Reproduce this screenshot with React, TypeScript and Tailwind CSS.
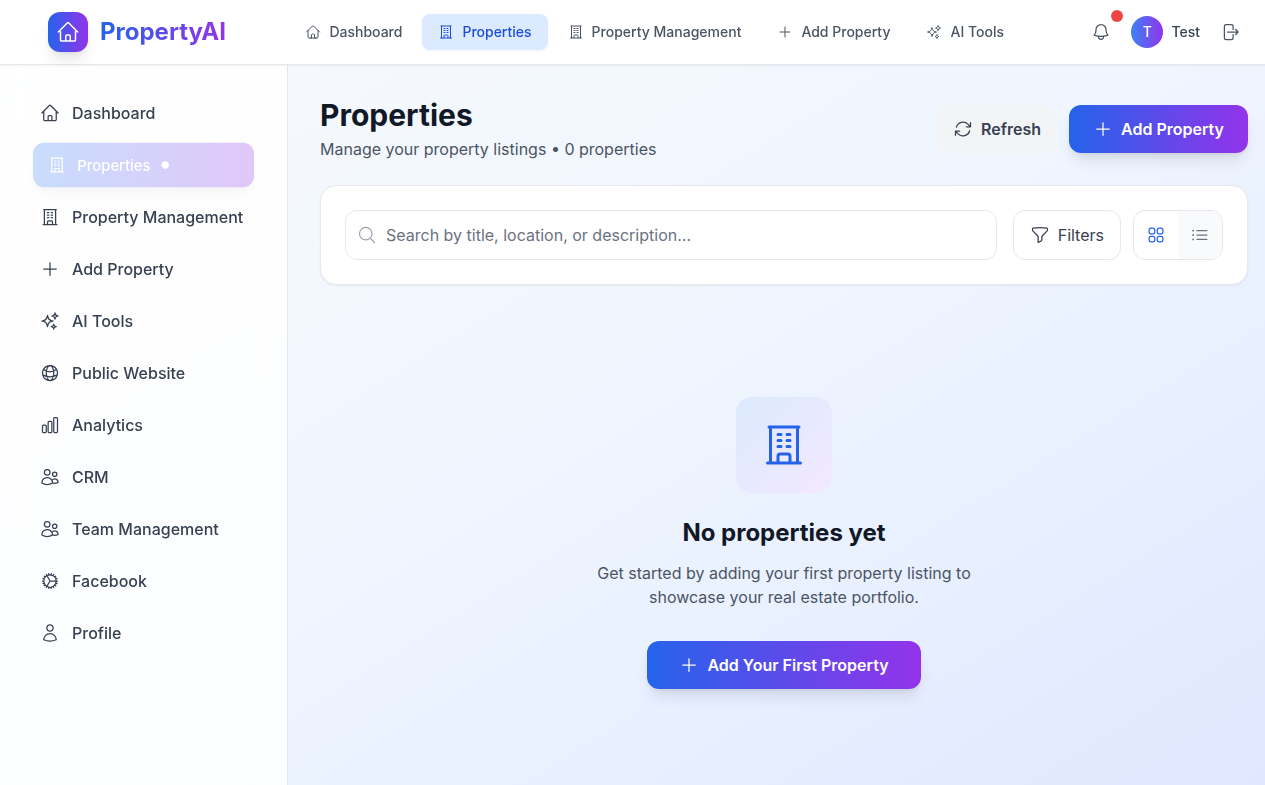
import type { IconType } from "react-icons";
import {
  HiOutlineArrowPath,
  HiOutlineArrowRightOnRectangle,
  HiOutlineBell,
  HiOutlineBuildingOffice,
  HiOutlineChartBar,
  HiOutlineCog,
  HiOutlineFunnel,
  HiOutlineGlobeAlt,
  HiOutlineHome,
  HiOutlineListBullet,
  HiOutlineMagnifyingGlass,
  HiOutlinePlus,
  HiOutlineSparkles,
  HiOutlineSquares2X2,
  HiOutlineUser,
  HiOutlineUsers,
} from "react-icons/hi2";

type NavItem = { label: string; icon: IconType; active?: boolean };

const topNav: NavItem[] = [
  { label: "Dashboard", icon: HiOutlineHome },
  { label: "Properties", icon: HiOutlineBuildingOffice, active: true },
  { label: "Property Management", icon: HiOutlineBuildingOffice },
  { label: "Add Property", icon: HiOutlinePlus },
  { label: "AI Tools", icon: HiOutlineSparkles },
];

const sideNav: NavItem[] = [
  ...topNav,
  { label: "Public Website", icon: HiOutlineGlobeAlt },
  { label: "Analytics", icon: HiOutlineChartBar },
  { label: "CRM", icon: HiOutlineUsers },
  { label: "Team Management", icon: HiOutlineUsers },
  { label: "Facebook", icon: HiOutlineCog },
  { label: "Profile", icon: HiOutlineUser },
];

function Header() {
  return (
    <header className="relative z-10 flex h-[65px] shrink-0 items-center border-b border-gray-200 bg-white/95 pl-12 pr-[17px] shadow-xs backdrop-blur-md">
      <div className="flex w-[241.4px] shrink-0 items-center gap-3">
        <div className="flex size-10 items-center justify-center rounded-xl bg-linear-to-r/srgb from-[#2563eb] to-[#9333ea] text-white shadow-lg">
          <HiOutlineHome className="size-6" />
        </div>
        <span className="bg-linear-to-r/srgb from-[#2563eb] to-[#9333ea] bg-clip-text text-2xl font-bold text-transparent">
          PropertyAI
        </span>
      </div>
      <nav className="flex items-center gap-1">
        {topNav.map(({ label, icon: Icon, active }) => (
          <a
            key={label}
            className={
              active
                ? "flex h-9 items-center gap-2 whitespace-nowrap rounded-lg bg-[#dbeafe] px-4 text-sm font-medium text-[#1d4ed8] shadow-xs"
                : "flex h-9 items-center gap-2 whitespace-nowrap rounded-lg px-4 text-sm font-medium text-[#4b5563]"
            }
          >
            <Icon className="size-4" />
            {label}
          </a>
        ))}
      </nav>
      <div className="ml-auto flex items-center gap-3">
        <button className="relative p-2 text-[#4b5563]">
          <HiOutlineBell className="size-5" />
          <span className="absolute -right-1 -top-1 size-3 rounded-full bg-[#ef4444]" />
        </button>
        <div className="flex items-center gap-2">
          <div className="flex size-8 items-center justify-center rounded-full bg-linear-to-r/srgb from-[#3b82f6] to-[#9333ea] text-sm font-medium text-white">
            T
          </div>
          <span className="text-sm font-medium text-[#374151]">Test</span>
        </div>
        <button className="p-2 text-[#4b5563]">
          <HiOutlineArrowRightOnRectangle className="size-5" />
        </button>
      </div>
    </header>
  );
}

function Sidebar() {
  return (
    <aside className="w-72 shrink-0 border-r border-gray-200 bg-white/85 p-6 backdrop-blur-md">
      <nav className="flex flex-col gap-1">
        {sideNav.map(({ label, icon: Icon, active }) => (
          <a
            key={label}
            className={
              active
                ? "flex h-12 scale-[0.925] items-center gap-3 whitespace-nowrap rounded-xl bg-linear-to-r/srgb from-[#3b82f6] to-[#9333ea] px-4 font-medium text-white opacity-27 shadow-lg"
                : "flex h-12 items-center gap-3 whitespace-nowrap rounded-xl px-4 font-medium text-[#374151]"
            }
          >
            <Icon className="size-5 shrink-0" />
            {label}
            {active && <span className="size-2 rounded-full bg-white" />}
          </a>
        ))}
      </nav>
    </aside>
  );
}

function Toolbar() {
  return (
    <section className="mt-6 flex h-[100px] items-center rounded-2xl border border-gray-200 bg-white px-6 shadow-xs">
      <label className="flex h-[50px] flex-1 items-center gap-[9px] rounded-xl border border-gray-200 px-[11px]">
        <HiOutlineMagnifyingGlass className="size-5 text-[#9ca3af]" />
        <input
          className="flex-1 text-base text-[#111827] outline-none placeholder:text-[#6b7280]"
          placeholder="Search by title, location, or description..."
        />
      </label>
      <button className="ml-4 flex h-[50px] items-center gap-2 rounded-xl border border-gray-200 px-4 text-[#374151]">
        <HiOutlineFunnel className="size-5" />
        Filters
      </button>
      <div className="ml-3 flex h-[50px] w-[90px] overflow-hidden rounded-xl border border-gray-200">
        <button className="flex flex-1 items-center justify-center text-[#2563eb]">
          <HiOutlineSquares2X2 className="size-5" />
        </button>
        <button className="flex flex-1 items-center justify-center bg-[#f9fafb] text-[#6b7280]">
          <HiOutlineListBullet className="size-5" />
        </button>
      </div>
    </section>
  );
}

function EmptyState() {
  return (
    <section className="mt-28 flex flex-col items-center text-center">
      <div className="flex size-24 items-center justify-center rounded-2xl bg-linear-to-br/srgb from-[#dbeafe] to-[#f3e8ff] text-[#2563eb]">
        <HiOutlineBuildingOffice className="size-12" />
      </div>
      <h3 className="mt-6 text-2xl font-bold text-[#111827]">No properties yet</h3>
      <p className="mt-3 w-96 text-base text-[#4b5563]">
        Get started by adding your first property listing to showcase your real estate portfolio.
      </p>
      <button className="mt-8 flex h-12 items-center gap-2 rounded-xl bg-linear-to-r/srgb from-[#2563eb] to-[#9333ea] px-8 font-semibold text-white shadow-lg">
        <HiOutlinePlus className="size-5" />
        Add Your First Property
      </button>
    </section>
  );
}

export default function App() {
  return (
    <div className="flex h-screen flex-col overflow-hidden bg-linear-to-br/srgb from-[#f8fafc] via-[#eff6ff] to-[#e0e7ff] font-['Inter',sans-serif]">
      <Header />
      <div className="flex min-h-0 flex-1">
        <Sidebar />
        <main className="min-w-0 flex-1 pl-8 pr-[17px] pt-8">
          <div className="flex items-center">
            <div>
              <h1 className="text-3xl font-bold text-[#111827]">Properties</h1>
              <p className="mt-1 text-base text-[#4b5563]">
                Manage your property listings • 0 properties
              </p>
            </div>
            <div className="ml-auto flex gap-3">
              <button className="flex h-12 items-center gap-2 rounded-xl bg-[#f3f4f6] px-4 font-semibold text-[#374151]">
                <HiOutlineArrowPath className="size-5" />
                Refresh
              </button>
              <button className="flex h-12 items-center gap-2 rounded-xl bg-linear-to-r/srgb from-[#2563eb] to-[#9333ea] px-6 font-semibold text-white shadow-lg">
                <HiOutlinePlus className="size-5" />
                Add Property
              </button>
            </div>
          </div>
          <Toolbar />
          <EmptyState />
        </main>
      </div>
    </div>
  );
}
